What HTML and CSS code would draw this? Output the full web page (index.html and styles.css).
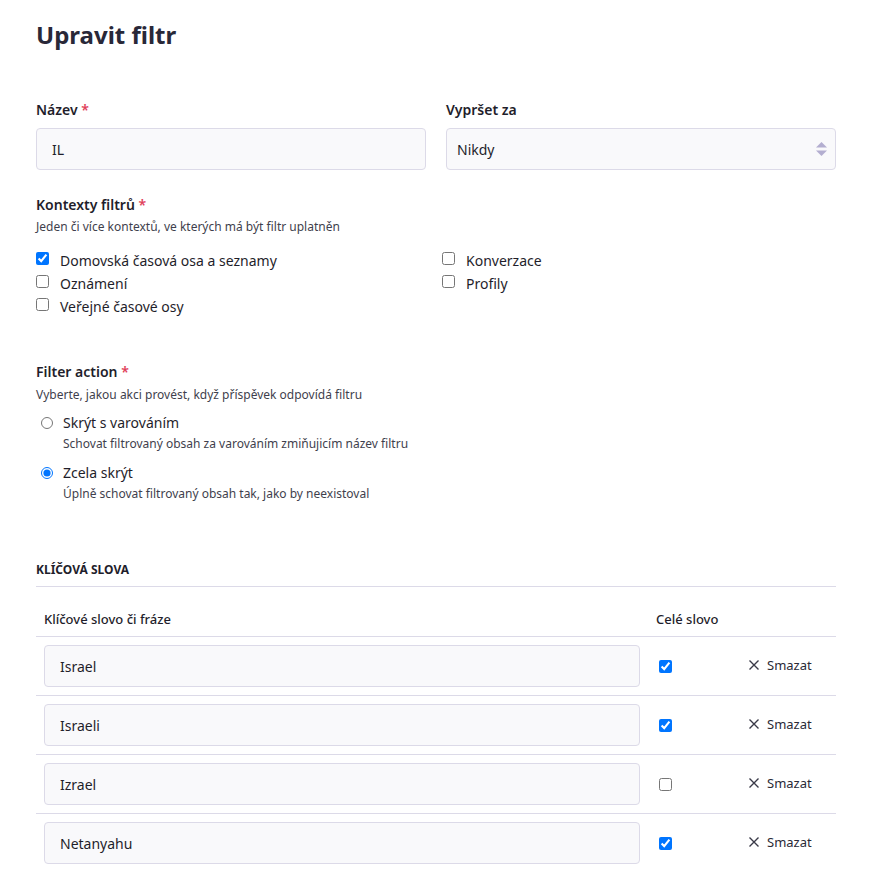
FILE: index.html
```html
<!DOCTYPE html>
<html lang="cs">
<head>
<meta charset="utf-8">
<title>Upravit filtr</title>
<link rel="stylesheet" href="styles.css">
</head>
<body>
<div class="page">
  <h1 class="title">Upravit filtr</h1>

  <div class="row2">
    <div class="field">
      <label class="label">Název <span class="req">*</span></label>
      <input class="text-input" type="text" value="IL">
    </div>
    <div class="field">
      <label class="label">Vypršet za</label>
      <div class="select-wrap">
        <select class="select"><option>Nikdy</option></select>
        <svg class="select-arrows" width="11" height="14" viewBox="0 0 11 14"><path d="M5.5 0 L11 5.5 L0 5.5 Z" fill="#b3aed0"/><path d="M0 8.5 L11 8.5 L5.5 14 Z" fill="#b3aed0"/></svg>
      </div>
    </div>
  </div>

  <div class="group ctx">
    <div class="label">Kontexty filtrů <span class="req">*</span></div>
    <div class="hint">Jeden či více kontextů, ve kterých má být filtr uplatněn</div>
    <div class="checks">
      <label class="check"><input type="checkbox" checked><span>Domovská časová osa a seznamy</span></label>
      <label class="check"><input type="checkbox"><span>Konverzace</span></label>
      <label class="check"><input type="checkbox"><span>Oznámení</span></label>
      <label class="check"><input type="checkbox"><span>Profily</span></label>
      <label class="check"><input type="checkbox"><span>Veřejné časové osy</span></label>
    </div>
  </div>

  <div class="group action">
    <div class="label">Filter action <span class="req">*</span></div>
    <div class="hint">Vyberte, jakou akci provést, když příspěvek odpovídá filtru</div>
    <div class="radios">
      <label class="radio">
        <input type="radio" name="act">
        <span class="radio-text"><span class="radio-label">Skrýt s varováním</span><span class="radio-hint">Schovat filtrovaný obsah za varováním zmiňujicím název filtru</span></span>
      </label>
      <label class="radio">
        <input type="radio" name="act" checked>
        <span class="radio-text"><span class="radio-label">Zcela skrýt</span><span class="radio-hint">Úplně schovat filtrovaný obsah tak, jako by neexistoval</span></span>
      </label>
    </div>
  </div>

  <h4 class="section">KLÍČOVÁ SLOVA</h4>

  <table class="kw">
    <colgroup><col class="c1"><col class="c2"><col class="c3"></colgroup>
    <thead>
      <tr><th>Klíčové slovo či fráze</th><th>Celé slovo</th><th></th></tr>
    </thead>
    <tbody>
      <tr><td><input class="text-input kw-input" type="text" value="Israel"></td><td><input class="kw-check" type="checkbox" checked></td><td><span class="del"><svg width="10" height="10" viewBox="0 0 10 10"><path d="M0.5 0.5 L9.5 9.5 M9.5 0.5 L0.5 9.5" stroke="#3a3a48" stroke-width="1.4"/></svg>Smazat</span></td></tr>
      <tr><td><input class="text-input kw-input" type="text" value="Israeli"></td><td><input class="kw-check" type="checkbox" checked></td><td><span class="del"><svg width="10" height="10" viewBox="0 0 10 10"><path d="M0.5 0.5 L9.5 9.5 M9.5 0.5 L0.5 9.5" stroke="#3a3a48" stroke-width="1.4"/></svg>Smazat</span></td></tr>
      <tr><td><input class="text-input kw-input" type="text" value="Izrael"></td><td><input class="kw-check" type="checkbox"></td><td><span class="del"><svg width="10" height="10" viewBox="0 0 10 10"><path d="M0.5 0.5 L9.5 9.5 M9.5 0.5 L0.5 9.5" stroke="#3a3a48" stroke-width="1.4"/></svg>Smazat</span></td></tr>
      <tr><td><input class="text-input kw-input" type="text" value="Netanyahu"></td><td><input class="kw-check" type="checkbox" checked></td><td><span class="del"><svg width="10" height="10" viewBox="0 0 10 10"><path d="M0.5 0.5 L9.5 9.5 M9.5 0.5 L0.5 9.5" stroke="#3a3a48" stroke-width="1.4"/></svg>Smazat</span></td></tr>
    </tbody>
  </table>
</div>
</body>
</html>
```

FILE: styles.css
```css
* { box-sizing: border-box; }
body {
  margin: 0;
  background: #fff;
  font-family: "Noto Sans", "Open Sans", sans-serif;
  color: #1f1e2b;
}
.page {
  width: 800px;
  margin-left: 36px;
}
.title {
  margin: 20px 0 0;
  font-size: 24px;
  line-height: 30px;
  font-weight: 700;
  color: #292838;
}
.row2 {
  display: grid;
  grid-template-columns: 1fr 1fr;
  column-gap: 20px;
  margin-top: 50px;
}
.field { display: flex; flex-direction: column; }
.label {
  display: block;
  font-size: 14px;
  line-height: 20px;
  font-weight: 600;
  color: #1f1e2b;
}
.req { color: #df405a; }
.field .label { margin-bottom: 8px; }
.text-input, .select {
  height: 42px;
  width: 100%;
  background: #f9f9fb;
  border: 1px solid #dcdae8;
  border-radius: 4px;
  font-family: inherit;
  font-size: 14px;
  color: #1f1e2b;
  padding: 0 15px;
  outline: none;
}
.select-wrap { position: relative; }
.select {
  appearance: none;
  -webkit-appearance: none;
  padding-left: 10px;
}
.select-arrows {
  position: absolute;
  right: 9px;
  top: 14px;
}
.group { margin-top: 25px; }
.hint {
  font-size: 12px;
  line-height: 16px;
  color: #3f3f4d;
  margin-top: 4px;
}
.checks {
  display: grid;
  grid-template-columns: 406px 1fr;
  margin-top: 14px;
}
.check {
  display: flex;
  align-items: center;
  height: 23px;
  font-size: 14px;
  color: #1f1e2b;
}
.check input {
  margin: 0 11px 0 0;
  width: 13px;
  height: 13px;
  position: relative;
  top: -2px;
}
.action { margin-top: 44px; }
.action .hint { margin-top: 5px; }
.radios { display: flex; flex-direction: column; gap: 11px; margin-top: 10px; }
.radio {
  display: flex;
  align-items: flex-start;
}
.radio input {
  margin: 4px 10px 0 5px;
  width: 12px;
  height: 12px;
}
.radio-text { display: flex; flex-direction: column; }
.radio-label {
  font-size: 14px;
  line-height: 20px;
  color: #1f1e2b;
}
.radio-hint {
  font-size: 12px;
  line-height: 16px;
  color: #3f3f4d;
  margin-top: 3px;
}
.section {
  margin: 60px 0 0;
  font-size: 12px;
  line-height: 16px;
  font-weight: 700;
  color: #1f1e2b;
  padding-bottom: 8px;
  border-bottom: 1px solid #dcdae8;
}
.kw {
  width: 100%;
  border-collapse: collapse;
  table-layout: fixed;
  margin-top: 14px;
}
.c1 { width: 612px; }
.c2 { width: 92px; }
.c3 { width: 96px; }
.kw th {
  text-align: left;
  font-size: 13px;
  line-height: 20px;
  font-weight: 500;
  padding: 8px 8px 7px;
  border-bottom: 1px solid #dcdae8;
  color: #1f1e2b;
}
.kw td {
  padding: 8px;
  border-bottom: 1px solid #dcdae8;
  vertical-align: middle;
}
.kw tr:last-child td { border-bottom: none; }
.kw-input { font-size: 14px; }
.kw-check { margin: 0 0 0 3px; width: 13px; height: 13px; display: block; }
.del {
  display: inline-flex;
  align-items: center;
  gap: 8px;
  font-size: 13px;
  color: #2a2a36;
  position: relative;
  top: -2px;
  left: 1px;
}
```
